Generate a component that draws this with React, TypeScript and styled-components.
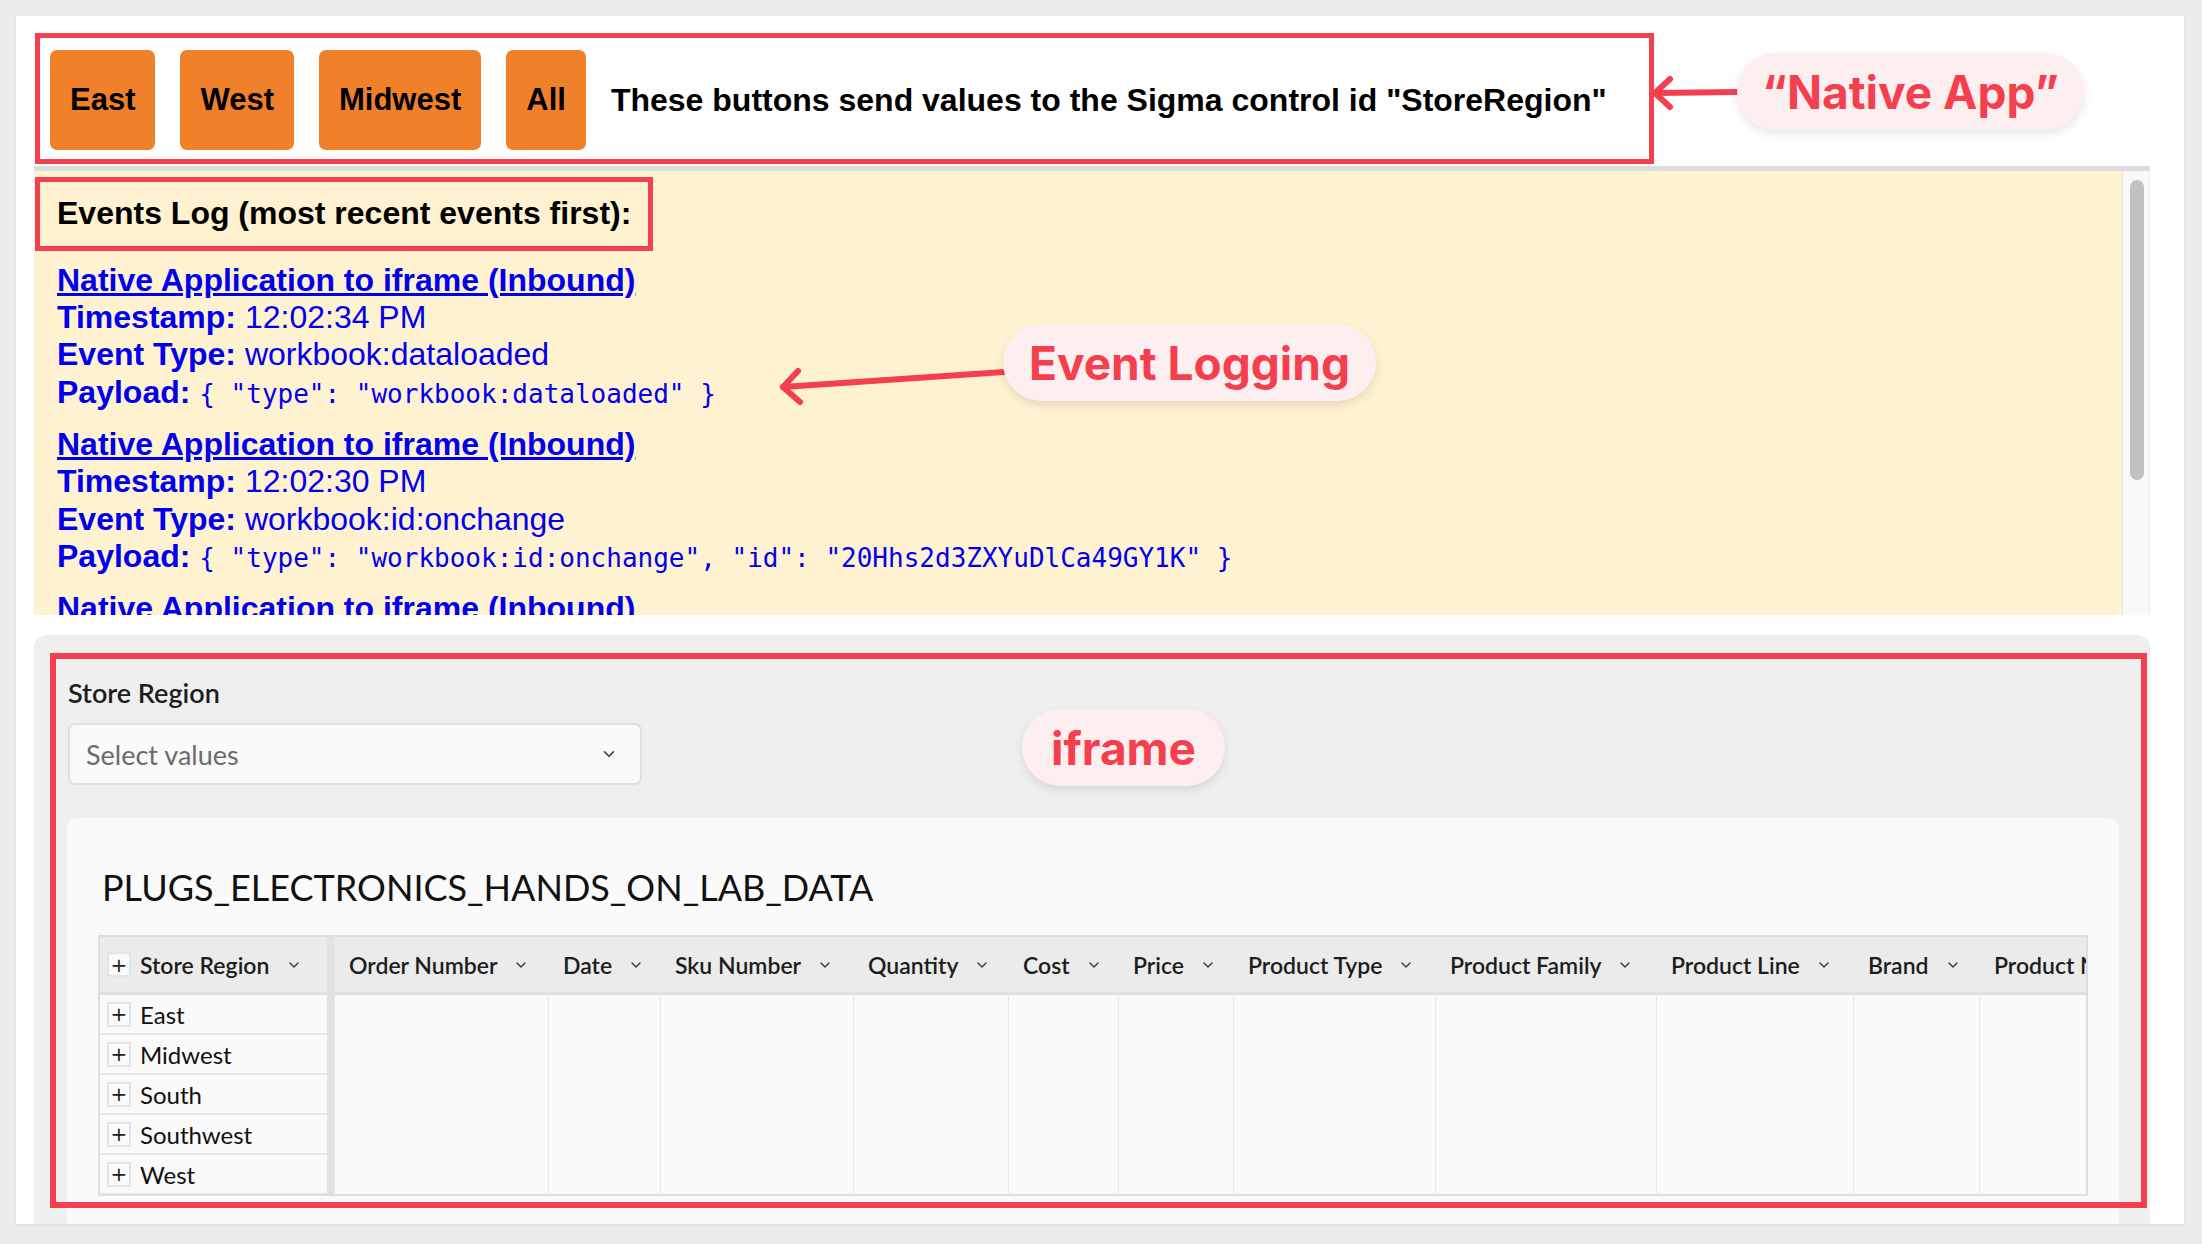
import React from "react";
import styled, { createGlobalStyle } from "styled-components";
import { ChevronDown } from "lucide-react";

const GlobalStyle = createGlobalStyle`
  html, body { margin: 0; padding: 0; }
  body {
    background: #ebebeb;
    font-family: "Liberation Sans", Arial, sans-serif;
  }
`;

const events = [
  {
    time: "12:02:34 PM",
    type: "workbook:dataloaded",
    payload: '{ "type": "workbook:dataloaded" }',
  },
  {
    time: "12:02:30 PM",
    type: "workbook:id:onchange",
    payload: '{ "type": "workbook:id:onchange", "id": "20Hhs2d3ZXYuDlCa49GY1K" }',
  },
  { time: "12:02:28 PM", type: "workbook:loaded", payload: '{ "type": "workbook:loaded" }' },
];

const columns = [
  { name: "Order Number", width: 214 },
  { name: "Date", width: 112 },
  { name: "Sku Number", width: 193 },
  { name: "Quantity", width: 155 },
  { name: "Cost", width: 110 },
  { name: "Price", width: 115 },
  { name: "Product Type", width: 202 },
  { name: "Product Family", width: 221 },
  { name: "Product Line", width: 197 },
  { name: "Brand", width: 126 },
  { name: "Product Name", width: 220 },
];

const regions = ["East", "Midwest", "South", "Southwest", "West"];

const App = () => (
  <Page>
    <GlobalStyle />
    <Card>
      <ControlBar>
        {["East", "West", "Midwest", "All"].map((r) => (
          <RegionButton key={r}>{r}</RegionButton>
        ))}
        <BarText>These buttons send values to the Sigma control id "StoreRegion"</BarText>
      </ControlBar>

      <LogPanel>
        <LogBody>
          <LogHeader>Events Log (most recent events first):</LogHeader>
          {events.map((e) => (
            <Entry key={e.time}>
              <EntryLink href="#">Native Application to iframe (Inbound)</EntryLink>
              <Line>
                <b>Timestamp:</b> {e.time}
              </Line>
              <Line>
                <b>Event Type:</b> {e.type}
              </Line>
              <Line>
                <b>Payload:</b> <Code>{e.payload}</Code>
              </Line>
            </Entry>
          ))}
        </LogBody>
        <ScrollTrack>
          <ScrollThumb />
        </ScrollTrack>
      </LogPanel>

      <IframeArea>
        <ControlLabel>Store Region</ControlLabel>
        <SelectBox>
          <span>Select values</span>
          <ChevronDown size={18} strokeWidth={2} color="#333" />
        </SelectBox>

        <TableCard>
          <TableTitle>PLUGS_ELECTRONICS_HANDS_ON_LAB_DATA</TableTitle>
          <Table>
            <GroupPane>
              <HeaderCell>
                <PlusBox>+</PlusBox>
                <span>Store Region</span>
                <ChevronDown size={16} strokeWidth={2} color="#333" />
              </HeaderCell>
              {regions.map((r) => (
                <GroupRow key={r}>
                  <PlusBox>+</PlusBox>
                  {r}
                </GroupRow>
              ))}
            </GroupPane>
            <PaneDivider />
            {columns.map((c) => (
              <Column key={c.name} $width={c.width}>
                <HeaderCell>
                  <span>{c.name}</span>
                  <ChevronDown size={16} strokeWidth={2} color="#333" />
                </HeaderCell>
              </Column>
            ))}
          </Table>
        </TableCard>

        <FocusFrame />
      </IframeArea>

      <Arrows width="2168" height="1208" viewBox="0 0 2168 1208">
        <g stroke="#f43f4f" strokeWidth="6" strokeLinecap="round" strokeLinejoin="round" fill="none">
          <path d="M1721 76 L1639 77" />
          <path d="M1654 63 L1639 77 L1654 91" />
          <path d="M988 356 L767 371" />
          <path d="M782 355 L767 371 L784 386" />
        </g>
      </Arrows>
      <Callout $left={1721} $top={37} $width={347}>“Native App”</Callout>
      <Callout $left={987} $top={308} $width={373}>Event Logging</Callout>
      <Callout $left={1006} $top={693} $width={203}>iframe</Callout>
    </Card>
  </Page>
);

export default App;

const Page = styled.div`
  padding: 16px 18px 20px 16px;
`;

const Card = styled.div`
  position: relative;
  background: #fff;
  height: 1208px;
  overflow: hidden;
  padding: 17px 34px 0 18px;
  box-sizing: border-box;
  box-shadow: 0 1px 3px rgba(0, 0, 0, 0.08);
`;

const ControlBar = styled.div`
  width: 1619px;
  box-sizing: border-box;
  margin-left: 1px;
  border: 5px solid #f43f4f;
  padding: 12px 10px 9px;
  display: flex;
  align-items: center;
  gap: 25px;
`;

const RegionButton = styled.button`
  height: 100px;
  padding: 0 20px;
  border: none;
  border-radius: 7px;
  background: #f0802a;
  color: #000;
  font-family: "Liberation Sans", Arial, sans-serif;
  font-weight: bold;
  font-size: 31px;
`;

const BarText = styled.span`
  font-weight: bold;
  font-size: 32px;
  color: #000;
`;

const LogPanel = styled.div`
  margin-top: 2px;
  border-top: 5px solid #dcdcdc;
  height: 444px;
  background: #fff2d0;
  display: flex;
`;

const LogBody = styled.div`
  flex: 1;
  overflow: hidden;
  padding: 6px 0 0 1px;
`;

const LogHeader = styled.div`
  display: inline-block;
  border: 5px solid #f43f4f;
  padding: 13px 17px 14px 17px;
  font-weight: bold;
  font-size: 32px;
  color: #000;
  margin-bottom: 11px;
`;

const Entry = styled.div`
  margin-left: 22px;
  margin-bottom: 13px;
  color: #0000ee;
  font-size: 32px;
`;

const EntryLink = styled.a`
  display: block;
  color: #0000ee;
  font-weight: bold;
  text-decoration: underline;
`;

const Line = styled.div`
  line-height: 37.4px;
`;

const Code = styled.span`
  font-family: "DejaVu Sans Mono", "Liberation Mono", monospace;
  font-size: 26px;
`;

const ScrollTrack = styled.div`
  width: 28px;
  background: #f9f9f9;
  border-left: 1px solid #e6e6e6;
  border-right: 1px solid #ececec;
  box-sizing: border-box;
  padding: 9px 0 0 7px;
`;

const ScrollThumb = styled.div`
  width: 14px;
  height: 300px;
  border-radius: 7px;
  background: #c1c1c1;
`;

const IframeArea = styled.div`
  position: relative;
  margin-top: 20px;
  background: #efefef;
  border-radius: 12px 12px 0 0;
  height: 620px;
  padding: 42px 31px 0 33px;
  box-sizing: border-box;
  font-family: Lato, "Noto Sans", sans-serif;
`;

const ControlLabel = styled.div`
  margin-left: 1px;
  font-size: 27px;
  font-weight: 600;
  color: #1d1d1d;
  line-height: 32px;
`;

const SelectBox = styled.div`
  margin-top: 14px;
  margin-left: 1px;
  width: 574px;
  height: 62px;
  box-sizing: border-box;
  border: 2px solid #e0e0e0;
  border-radius: 7px;
  background: #fafafa;
  display: flex;
  align-items: center;
  justify-content: space-between;
  padding: 0 22px 0 16px;
  font-size: 27px;
  color: #6b6b6b;
`;

const TableCard = styled.div`
  margin-top: 33px;
  background: #fafafa;
  border-radius: 10px 10px 0 0;
  padding: 48px 31px 0;
  height: 420px;
`;

const TableTitle = styled.div`
  margin-left: 4px;
  font-size: 36px;
  font-weight: 400;
  color: #111;
  line-height: 43px;
  margin-bottom: 26px;
`;

const Table = styled.div`
  display: flex;
  height: 257px;
  border: 2px solid #dedede;
  overflow: hidden;
  background: #fafafa;
`;

const GroupPane = styled.div`
  width: 227px;
  flex: none;
`;

const PaneDivider = styled.div`
  width: 8px;
  flex: none;
  background: #e2e2e2;
`;

const Column = styled.div<{ $width: number }>`
  width: ${(p) => p.$width}px;
  flex: none;
  border-right: 1px solid #e8e8e8;
  box-sizing: border-box;
`;

const HeaderCell = styled.div`
  height: 55px;
  background: #ebebeb;
  border-bottom: 3px solid #e0e0e0;
  display: flex;
  align-items: center;
  gap: 14px;
  padding: 0 0 0 14px;
  font-size: 23px;
  font-weight: 600;
  color: #1d1d1d;
  white-space: nowrap;
  span + svg {
    margin-left: 2px;
  }
  ${GroupPane} & {
    padding-left: 7px;
    gap: 9px;
  }
  ${GroupPane} & svg {
    margin-left: 8px;
  }
`;

const GroupRow = styled.div`
  height: 40px;
  box-sizing: border-box;
  border-bottom: 2px solid #e8e8e8;
  display: flex;
  align-items: center;
  gap: 9px;
  padding-left: 7px;
  font-size: 24px;
  color: #111;
`;

const PlusBox = styled.span`
  width: 24px;
  height: 25px;
  box-sizing: border-box;
  border: 2px solid #e4e4e4;
  background: #fafafa;
  display: flex;
  align-items: center;
  justify-content: center;
  font-family: "DejaVu Sans", sans-serif;
  font-size: 20px;
  font-weight: 400;
  color: #222;
  line-height: 1;
`;

const FocusFrame = styled.div`
  position: absolute;
  left: 16px;
  top: 18px;
  width: 2097px;
  height: 555px;
  box-sizing: border-box;
  border: 6px solid #f43f4f;
  pointer-events: none;
`;

const Arrows = styled.svg`
  position: absolute;
  left: 0;
  top: 0;
  pointer-events: none;
`;

const Callout = styled.div<{ $left: number; $top: number; $width: number }>`
  position: absolute;
  left: ${(p) => p.$left}px;
  top: ${(p) => p.$top}px;
  width: ${(p) => p.$width}px;
  height: 77px;
  border-radius: 39px;
  background: #fdeff0;
  box-shadow: 0 4px 10px rgba(0, 0, 0, 0.1);
  display: flex;
  align-items: center;
  justify-content: center;
  font-family: Inter, "Noto Sans", sans-serif;
  font-weight: 700;
  font-size: 46px;
  color: #f43f4f;
`;
